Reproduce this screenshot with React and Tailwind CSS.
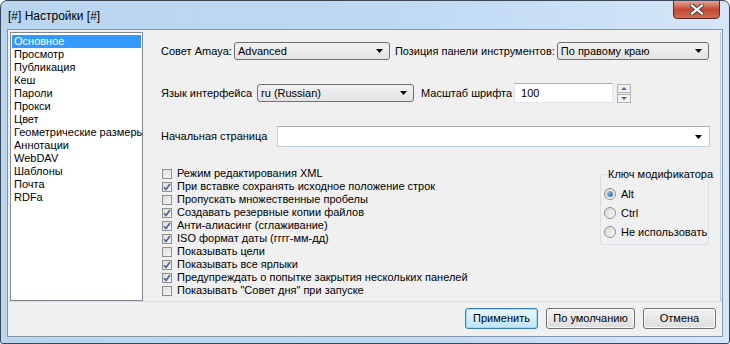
import React from "react";

const PAGES = [
  "Основное",
  "Просмотр",
  "Публикация",
  "Кеш",
  "Пароли",
  "Прокси",
  "Цвет",
  "Геометрические размеры",
  "Аннотации",
  "WebDAV",
  "Шаблоны",
  "Почта",
  "RDFa",
];

const OPTIONS = [
  ["Режим редактирования XML", false],
  ["При вставке сохранять исходное положение строк", true],
  ["Пропускать множественные пробелы", false],
  ["Создавать резервные копии файлов", true],
  ["Анти-алиасинг (сглаживание)", true],
  ["ISO формат даты (гггг-мм-дд)", true],
  ["Показывать цели", false],
  ["Показывать все ярлыки", true],
  ["Предупреждать о попытке закрытия нескольких панелей", true],
  ['Показывать "Совет дня" при запуске', false],
];

const Arrow = () => (
  <svg width="7" height="4" viewBox="0 0 7 4" className="shrink-0">
    <path d="M0 0h7L3.5 4z" fill="#000" />
  </svg>
);

// readonly win7 combobox
const Select = ({ value, className }) => (
  <div
    className={`h-[18px] shrink-0 flex items-center justify-between pl-[3px] pr-[6px] border border-[#707070] rounded-[3px] bg-gradient-to-b from-[#f2f2f2] to-[#e3e3e3] ${className}`}
  >
    <span className="whitespace-nowrap">{value}</span>
    <Arrow />
  </div>
);

const Check = ({ on }) => (
  <div className="w-[10px] h-[10px] border border-[#8e8f8f] bg-gradient-to-br from-[#dcdcdc] to-[#f8f8f8] flex items-center justify-center shrink-0">
    {on && (
      <svg width="8" height="8" viewBox="0 0 8 8">
        <path d="M1 4.2l2 2.3L7 1" stroke="#4a5f97" strokeWidth="1.6" fill="none" />
      </svg>
    )}
  </div>
);

const Radio = ({ on }) => (
  <div className="w-[12px] h-[12px] rounded-full border border-[#8e8f8f] bg-gradient-to-br from-[#d8d8d8] to-[#fafafa] flex items-center justify-center shrink-0">
    {on && (
      <div className="w-[6px] h-[6px] rounded-full bg-gradient-to-br from-[#9bd2f5] to-[#1c5d9a]" />
    )}
  </div>
);

const Button = ({ children, primary, className }) => (
  <div
    className={`h-[21px] flex items-center justify-center rounded-[3px] border ${
      primary
        ? "border-[#3c7fb1] bg-gradient-to-b from-[#eaf6fd] to-[#bee6fd] shadow-[inset_0_0_0_1px_#9fdcf9]"
        : "border-[#707070] bg-gradient-to-b from-[#f2f2f2] to-[#dddddd] shadow-[inset_0_0_0_1px_#fbfbfb]"
    } ${className}`}
  >
    {children}
  </div>
);

export default function App() {
  return (
    <div className="w-[730px] h-[344px] flex flex-col border border-[#3a4757] rounded-t-[7px] rounded-b-[3px] bg-gradient-to-r from-[#b9d5ef] via-[#bcd8f2] to-[#d4e6f8] font-['Liberation_Sans',sans-serif] text-[11px] text-black overflow-hidden">
      {/* ===== title bar ===== */}
      <div className="h-[28px] shrink-0 flex items-start justify-between">
        <span className="text-[12px] mt-[6px] ml-[7px]">[#] Настройки [#]</span>
        <div className="w-[47px] h-[19px] mr-[9px] -mt-[1px] rounded-b-[4px] border border-[#5a2a25] bg-gradient-to-b from-[#e6a394] via-[#c4482f] to-[#cd6a50] flex items-center justify-center">
          <svg width="14" height="11" viewBox="0 0 14 11">
            <path
              d="M2 1.5L12 9.5M12 1.5L2 9.5"
              stroke="#3b3b3b"
              strokeWidth="4"
              strokeLinecap="square"
            />
            <path
              d="M2 1.5L12 9.5M12 1.5L2 9.5"
              stroke="#fff"
              strokeWidth="2.2"
              strokeLinecap="square"
            />
          </svg>
        </div>
      </div>

      {/* ===== client ===== */}
      <div className="flex-1 mx-[6px] mb-[6px] border border-[#8596a8] bg-[#f0f0f0] flex flex-col">
        <div className="h-[272px] flex pt-[2px] pl-[2px] pr-[1px] border-b border-[#dcdcdc]">
          {/* page list */}
          <div className="w-[133px] h-[269px] shrink-0 border border-[#828790] bg-white pt-[2px] px-[1px] overflow-hidden">
            {PAGES.map((p, i) => (
              <div
                key={p}
                className={`h-[13px] leading-[13px] pl-[2px] whitespace-nowrap ${
                  i === 0 ? "bg-[#3399ff] text-white" : ""
                }`}
              >
                {p}
              </div>
            ))}
          </div>

          {/* settings panel */}
          <div className="flex-1 min-w-0 flex flex-col pt-[10px] pl-[18px] pr-[10px] border-r border-[#b8c4cf] whitespace-nowrap">
            <div className="flex items-center h-[18px]">
              <span className="shrink-0">Совет Amaya:</span>
              <Select value="Advanced" className="w-[156px] ml-[2px]" />
              <span className="shrink-0 ml-[5px]">Позиция панели инструментов:</span>
              <Select value="По правому краю" className="w-[152px] ml-[2px]" />
            </div>

            <div className="flex items-center h-[20px] mt-[23px]">
              <span className="shrink-0">Язык интерфейса</span>
              <Select value="ru (Russian)" className="w-[157px] ml-[5px]" />
              <span className="shrink-0 ml-[7px]">Масштаб шрифта</span>
              <div className="w-[99px] h-[20px] shrink-0 ml-[2px] border border-[#e2e3ea] border-t-[#abadb3] bg-white flex items-center pl-[6px]">
                100
              </div>
              <div className="ml-[4px] flex flex-col gap-[1px]">
                <div className="w-[14px] h-[9px] border border-[#b0b0b0] bg-[#f4f4f4] flex items-center justify-center">
                  <svg width="6" height="3" viewBox="0 0 6 3">
                    <path d="M0 3h6L3 0z" fill="#4a6ca8" />
                  </svg>
                </div>
                <div className="w-[14px] h-[9px] border border-[#b0b0b0] bg-[#f4f4f4] flex items-center justify-center">
                  <svg width="6" height="3" viewBox="0 0 6 3">
                    <path d="M0 0h6L3 3z" fill="#4a6ca8" />
                  </svg>
                </div>
              </div>
            </div>

            <div className="flex items-center h-[21px] mt-[23px]">
              <span className="w-[116px] shrink-0">Начальная страница</span>
              <div className="flex-1 h-[21px] border border-[#c5d0dc] border-t-[#abadb3] bg-white flex items-center justify-end pr-[7px]">
                <Arrow />
              </div>
            </div>

            <div className="flex mt-[20px]">
              <div className="flex flex-col">
                {OPTIONS.map(([label, on]) => (
                  <div key={label} className="h-[13px] flex items-center gap-[5px] pl-[1px]">
                    <Check on={on} />
                    <span className="leading-[13px]">{label}</span>
                  </div>
                ))}
              </div>

              {/* modifier key group */}
              <div className="ml-auto mr-[1px] mt-[7px] w-[109px] h-[71px] shrink-0 border border-[#d5dfe5] rounded-[3px] relative flex flex-col pt-[13px] pl-[3px] gap-[7px]">
                <span className="absolute -top-[7px] left-[6px] px-[1px] bg-[#f0f0f0] leading-[13px]">
                  Ключ модификатора
                </span>
                {[
                  ["Alt", true],
                  ["Ctrl", false],
                  ["Не использовать", false],
                ].map(([l, on]) => (
                  <div key={l} className="h-[12px] flex items-center gap-[5px]">
                    <Radio on={on} />
                    <span>{l}</span>
                  </div>
                ))}
              </div>
            </div>
          </div>
        </div>

        {/* buttons */}
        <div className="flex-1 flex items-start justify-end pt-[6px] pr-[6px] gap-[8px]">
          <Button primary className="w-[73px]">
            Применить
          </Button>
          <Button className="w-[89px]">По умолчанию</Button>
          <Button className="w-[73px]">Отмена</Button>
        </div>
      </div>
    </div>
  );
}
